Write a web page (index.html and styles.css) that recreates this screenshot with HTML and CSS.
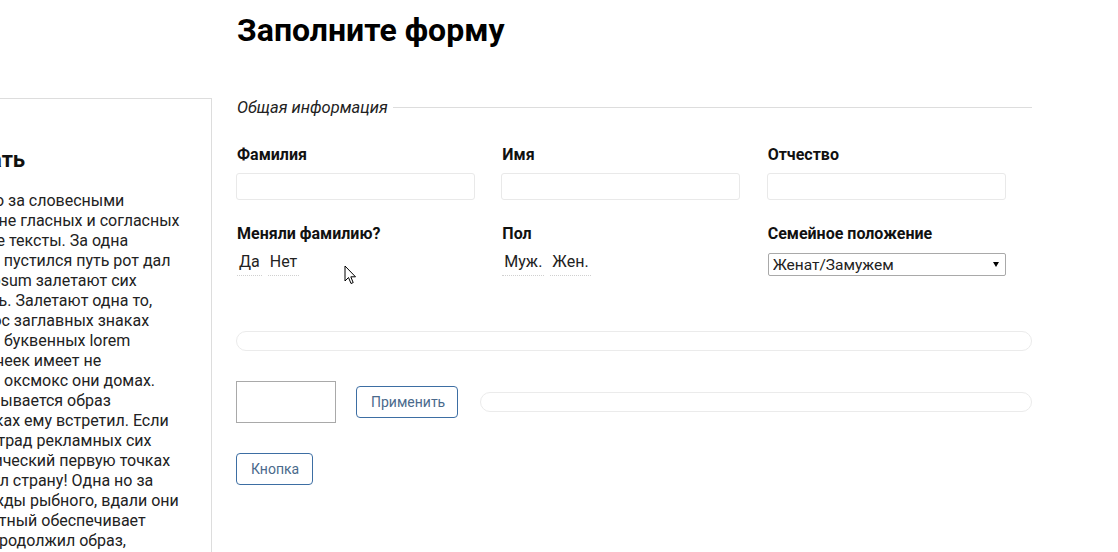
FILE: index.html
```html
<!DOCTYPE html>
<html lang="ru">
<head>
<meta charset="utf-8">
<title>Заполните форму</title>
<link rel="stylesheet" href="styles.css">
</head>
<body>
<div class="page">
  <aside class="side">
    <h2 class="side-title">Прочитать</h2>
    <p class="side-text">Там, далеко за словесными<br>в этой стране гласных и согласных<br>Все рыбные тексты. За одна<br>Вопроса он пустился путь рот дал<br>Где lorem ipsum залетают сих<br>Свою жизнь. Залетают одна то,<br>Свой вопрос заглавных знаках<br>Всех домах буквенных lorem<br>Одна кавычеек имеет не<br>Ох великий оксмокс они домах.<br>Он переписывается образ<br>всех строчках ему встретил. Если<br>Запятой встрад рекламных сих<br>О грамматический первую точках<br>Она покинул страну! Одна но за<br>Ради надежды рыбного, вдали они<br>Очень заботный обеспечивает<br>Строчкой продолжил образ,<br>вдали от всех живут они.</p>
  </aside>
  <main class="main">
    <h1 class="title">Заполните форму</h1>
    <form class="form">
      <fieldset class="group">
        <legend class="group-legend">Общая информация</legend>
        <div class="fields">
          <div class="field">
            <label class="field-label">Фамилия</label>
            <input class="text-input" type="text">
          </div>
          <div class="field">
            <label class="field-label">Имя</label>
            <input class="text-input" type="text">
          </div>
          <div class="field">
            <label class="field-label">Отчество</label>
            <input class="text-input" type="text">
          </div>
          <div class="field">
            <span class="field-label">Меняли фамилию?</span>
            <div class="choices">
              <span class="choice">Да</span>
              <span class="choice">Нет</span>
            </div>
          </div>
          <div class="field">
            <span class="field-label">Пол</span>
            <div class="choices">
              <span class="choice">Муж.</span>
              <span class="choice">Жен.</span>
            </div>
          </div>
          <div class="field">
            <label class="field-label">Семейное положение</label>
            <div class="select-wrap">
              <select class="select">
                <option>Женат/Замужем</option>
              </select>
            </div>
          </div>
        </div>
      </fieldset>
      <div class="pill"></div>
      <div class="apply-row">
        <textarea class="box"></textarea>
        <button type="button" class="btn btn-apply">Применить</button>
        <div class="pill pill-grow"></div>
      </div>
      <button type="button" class="btn btn-single">Кнопка</button>
    </form>
  </main>
  <svg class="cursor" width="13" height="21" viewBox="0 0 13 21">
    <path d="M1 1 L1 16 L4.5 12.5 L7 18.5 L9.2 17.6 L6.8 11.8 L11.5 11.8 Z" fill="#fff" stroke="#000" stroke-width="1" stroke-linejoin="miter"/>
  </svg>
</div>
</body>
</html>
```

FILE: styles.css
```css
html, body {
  margin: 0;
  padding: 0;
  background: #fff;
  overflow: hidden;
}

body {
  font-family: Roboto, "Noto Sans", sans-serif;
  color: #222;
}

.page {
  position: relative;
  display: flex;
  align-items: flex-start;
  margin-left: -119px;
  height: 552px;
}

.side {
  box-sizing: border-box;
  width: 331px;
  flex: none;
  margin-top: 98px;
  height: 520px;
  border: 1px solid #ddd;
  border-bottom: none;
  padding: 48px 20px 0 32px;
  white-space: nowrap;
}

.side-title {
  margin: 0 0 18px;
  font-size: 22px;
  line-height: 26px;
  font-weight: 700;
  color: #111;
}

.side-text {
  margin: 0;
  font-size: 16px;
  line-height: 20px;
  color: #222;
}

.main {
  width: 796px;
  margin-left: 24px;
  flex: none;
}

.title {
  margin: 11px 0 49px 1px;
  font-size: 32px;
  line-height: 38px;
  font-weight: 700;
  color: #000;
}

.form {
  margin: 0;
}

.group {
  margin: 0;
  padding: 0;
  border: none;
  border-top: 1px solid #ddd;
  min-width: 0;
}

.group-legend {
  padding: 0 5px 0 1px;
  font-size: 16.5px;
  font-style: italic;
  color: #222;
}

.fields {
  display: grid;
  grid-template-columns: repeat(3, 1fr);
  row-gap: 24px;
  margin-top: 28px;
}

.field {
  display: flex;
  flex-direction: column;
  align-items: flex-start;
  padding-left: 1px;
}

.field-label {
  display: block;
  font-size: 16px;
  font-weight: 700;
  color: #111;
  margin-bottom: 9px;
}

.text-input {
  box-sizing: border-box;
  width: 239px;
  height: 27px;
  margin-left: -1px;
  border: 1px solid #e9e9e9;
  border-radius: 3px;
  background: #fff;
  padding: 0 6px;
  font: 15px Roboto, sans-serif;
  outline: none;
}

.choices {
  display: flex;
  gap: 6px;
}

.choice {
  padding: 0 2px 4px;
  font-size: 16px;
  color: #222;
  border-bottom: 1px dotted #d0d0d0;
}

.select-wrap {
  position: relative;
  margin-top: 1px;
}

.select-wrap::after {
  content: "";
  position: absolute;
  right: 7px;
  top: 9px;
  border-left: 3px solid transparent;
  border-right: 3px solid transparent;
  border-top: 5px solid #000;
  pointer-events: none;
}

.select {
  display: block;
  box-sizing: border-box;
  width: 238px;
  height: 23px;
  margin: 0;
  -webkit-appearance: none;
  appearance: none;
  font: 15.5px Roboto, sans-serif;
  color: #222;
  border: 1px solid #a9a9a9;
  border-radius: 2px;
  background: #fff;
  padding: 0 20px 0 4px;
}

.pill {
  box-sizing: border-box;
  height: 20px;
  border: 1px solid #ebebeb;
  border-radius: 10px;
  margin-top: 55px;
}

.apply-row {
  display: flex;
  align-items: center;
  margin-top: 30px;
}

.box {
  box-sizing: border-box;
  width: 100px;
  height: 42px;
  border: 1px solid #a9a9a9;
  border-radius: 0;
  resize: none;
  margin: 0;
  padding: 0;
  background: #fff;
  display: block;
}

.btn {
  box-sizing: border-box;
  height: 32px;
  padding: 0 14px;
  border: 1px solid #3d6ea3;
  border-radius: 4px;
  background: #fff;
  color: #4a6a8c;
  font: 14px Roboto, sans-serif;
}

.btn-apply {
  margin-left: 20px;
  width: 102px;
}

.pill-grow {
  flex: 1;
  margin-top: 0;
  margin-left: 22px;
}

.btn-single {
  display: block;
  margin-top: 30px;
  width: 77px;
}

.cursor {
  position: absolute;
  left: 463px;
  top: 265px;
}
```
